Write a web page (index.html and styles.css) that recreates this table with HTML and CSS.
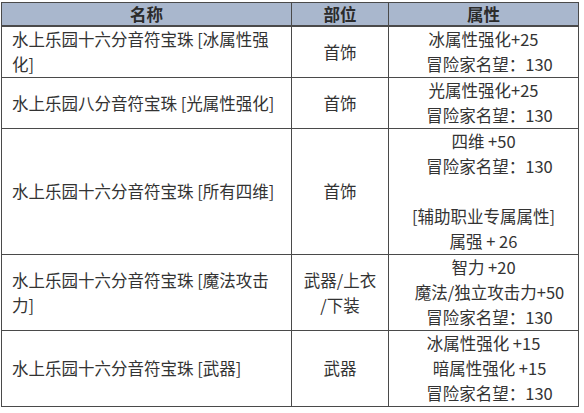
FILE: index.html
```html
<!DOCTYPE html>
<html lang="zh">
<head>
<meta charset="utf-8">
<link rel="stylesheet" href="styles.css">
</head>
<body>
<table class="gear">
  <colgroup><col class="c-name"><col class="c-part"><col class="c-attr"></colgroup>
  <thead>
    <tr><th>名称</th><th>部位</th><th>属性</th></tr>
  </thead>
  <tbody>
    <tr class="r2">
      <td class="name">水上乐园十六分音符宝珠 [冰属性强化]</td>
      <td class="part">首饰</td>
      <td class="attr"><div>冰属性强化+25</div><div class="rep">冒险家名望：130</div></td>
    </tr>
    <tr class="r2">
      <td class="name">水上乐园八分音符宝珠 [光属性强化]</td>
      <td class="part">首饰</td>
      <td class="attr"><div>光属性强化+25</div><div class="rep">冒险家名望：130</div></td>
    </tr>
    <tr class="r5">
      <td class="name">水上乐园十六分音符宝珠 [所有四维]</td>
      <td class="part">首饰</td>
      <td class="attr"><div>四维 +50</div><div class="rep">冒险家名望：130</div><div class="blank"></div><div>[辅助职业专属属性]</div><div>属强 + 26</div></td>
    </tr>
    <tr class="r3">
      <td class="name">水上乐园十六分音符宝珠 [魔法攻击力]</td>
      <td class="part">武器/上衣<br>/下装</td>
      <td class="attr"><div>智力 +20</div><div class="rep">魔法/独立攻击力+50</div><div class="rep">冒险家名望：130</div></td>
    </tr>
    <tr class="r3">
      <td class="name">水上乐园十六分音符宝珠 [武器]</td>
      <td class="part">武器</td>
      <td class="attr"><div>冰属性强化 +15</div><div class="rep">暗属性强化 +15</div><div class="rep">冒险家名望：130</div></td>
    </tr>
  </tbody>
</table>
</body>
</html>
```
FILE: styles.css
```css
html, body {
  margin: 0;
  padding: 0;
  background: #ffffff;
}
body {
  padding: 2px 0 0 1px;
  font-family: "Noto Sans CJK SC", "Noto Sans", sans-serif;
  color: #333333;
  font-size: 16.5px;
}
.gear {
  border-collapse: collapse;
  width: 577px;
  table-layout: fixed;
}
.c-name { width: 290px; }
.c-part { width: 97px; }
.c-attr { width: 190px; }
.gear th, .gear td {
  border: 1.5px solid #4a4a4a;
  padding: 0;
}
.gear th {
  background: #a9b7cd;
  height: 22px;
  line-height: 22px;
  font-weight: bold;
  color: #2b2b2b;
  text-align: center;
  border-bottom-width: 2px;
}
.gear td {
  line-height: 25px;
  vertical-align: middle;
}
.name {
  padding: 0 10px 0 10px !important;
  text-align: left;
}
.part {
  text-align: center;
}
.attr {
  text-align: center;
  white-space: nowrap;
}
.rep {
  padding-left: 12px;
}
.blank {
  height: 25px;
}
.r2 td { height: 48px; }
.r5 td { height: 125px; }
.r3 td { height: 74px; }
```
